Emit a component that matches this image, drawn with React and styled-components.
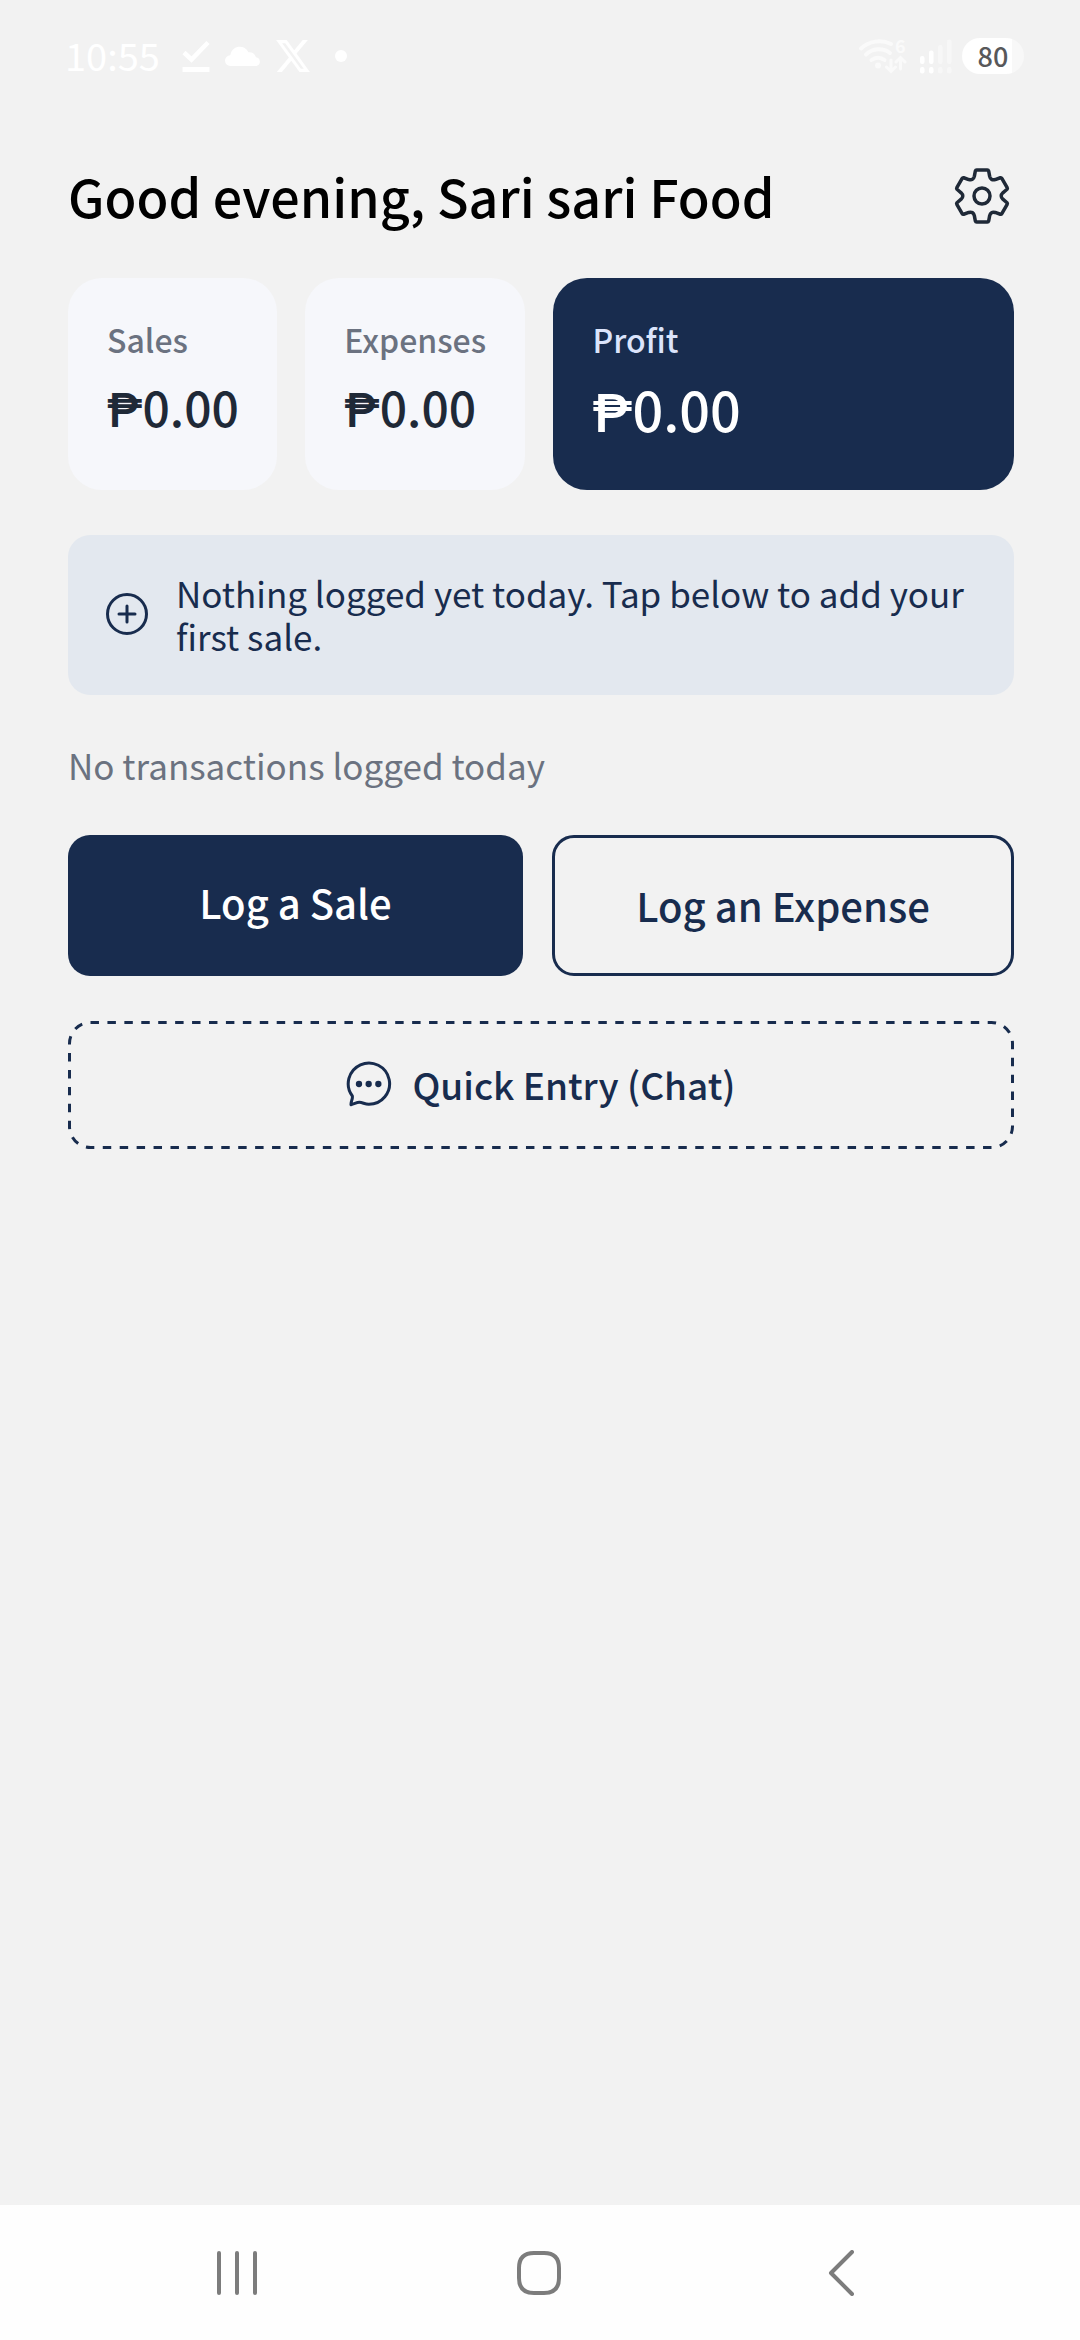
import React from "react";
import styled, { createGlobalStyle } from "styled-components";

const NAVY = "#182c4e";

const App = () => {
  return (
    <>
      <GlobalStyle />
      <Screen>
        <StatusBar />
        <Main>
          <Header>
            <Title>Good evening, Sari sari Food</Title>
            <IconButton aria-label="Settings">
              <GearIcon />
            </IconButton>
          </Header>

          <Cards>
            <Card>
              <CardLabel>Sales</CardLabel>
              <CardValue>₱0.00</CardValue>
            </Card>
            <Card>
              <CardLabel>Expenses</CardLabel>
              <CardValue>₱0.00</CardValue>
            </Card>
            <Card $dark>
              <CardLabel $dark>Profit</CardLabel>
              <CardValue $dark>₱0.00</CardValue>
            </Card>
          </Cards>

          <Banner>
            <PlusIcon />
            <BannerText>
              Nothing logged yet today. Tap below to add your first sale.
            </BannerText>
          </Banner>

          <EmptyText>No transactions logged today</EmptyText>

          <Actions>
            <ActionButton>Log a Sale</ActionButton>
            <ActionButton $outline>Log an Expense</ActionButton>
          </Actions>

          <QuickButton>
            <DashedBorder aria-hidden="true">
              <rect x="1.5" y="1.5" rx="21" pathLength="248" />
            </DashedBorder>
            <ChatIcon />
            Quick Entry (Chat)
          </QuickButton>
        </Main>
        <NavBar />
      </Screen>
    </>
  );
};

const StatusBar = () => (
  <Status>
    <Clock>10:55</Clock>
    <svg width="28" height="32" viewBox="0 0 28 32" fill="none" stroke="#fff">
      <path d="M2 12.5L9.5 19.500L26 2.5" strokeWidth="4.5" />
      <path d="M0.5 29.500H27.500" strokeWidth="5" />
    </svg>
    <svg width="36" height="20" viewBox="0 0 36 20" fill="#fff">
      <path d="M5.5 20A5.2 5.2 0 0 1 5.2 9.3A9.6 9.6 0 0 1 23.5 6.3A7.3 7.3 0 0 1 31 11.2A4.5 4.5 0 0 1 31.5 20Z" />
    </svg>
    <svg width="34" height="32" viewBox="1.2 2.2 21.7 19.6" preserveAspectRatio="none" fill="#fff">
      <path d="M18.244 2.25h3.308l-7.227 8.26 8.502 11.24H16.17l-5.214-6.817L4.99 21.75H1.68l7.73-8.835L1.254 2.25H8.08l4.713 6.231zm-1.161 17.52h1.833L7.084 4.126H5.117z" />
    </svg>
    <Dot />
    <StatusRight>
      <svg width="54" height="52" viewBox="0 -8 54 52" fill="none" stroke="#fafafa" strokeLinecap="round">
        <path d="M3 10.5A27 27 0 0 1 33 6" strokeWidth="4" />
        <path d="M8 16.5A18.5 18.5 0 0 1 32 15" strokeWidth="4" />
        <path d="M13.5 22A11 11 0 0 1 26.5 22" strokeWidth="4" />
        <circle cx="20" cy="27.5" r="3" fill="#fafafa" stroke="none" />
        <path d="M33 22V33M28.5 29L33 33.5L37.5 29M42.5 31V20M38 24L42.5 19.5L47 24" strokeWidth="3" />
        <text x="37" y="15" fontSize="18" fontWeight="700" fill="#fafafa" stroke="none">
          6
        </text>
      </svg>
      <svg width="32" height="36" viewBox="0 0 32 36">
        {[0, 1, 2, 3].map((i) => (
          <g key={i} fill={i < 2 ? "#fff" : "#f7f7f7"}>
            <rect x={i * 9} y={18 - i * 5.5} width="4.5" height={8 + i * 5.5} rx="2" />
            <rect x={i * 9} y="29" width="4.5" height="6.5" rx="2" />
          </g>
        ))}
      </svg>
      <Battery>80</Battery>
    </StatusRight>
  </Status>
);

const NavBar = () => (
  <Nav>
    <NavButton aria-label="Recent apps">
      <svg width="40" height="44" viewBox="0 0 40 44">
        <path d="M2 2V42M20 2V42M38 2V42" />
      </svg>
    </NavButton>
    <NavButton aria-label="Home">
      <svg width="44" height="44" viewBox="0 0 44 44">
        <path d="M17 2H27Q42 2 42 17V27Q42 42 27 42H17Q2 42 2 27V17Q2 2 17 2Z" />
      </svg>
    </NavButton>
    <NavButton aria-label="Back">
      <svg width="26" height="46" viewBox="0 0 26 46">
        <path d="M24 2L3 23L24 44" />
      </svg>
    </NavButton>
  </Nav>
);

// one tooth and the valley after it, turned six times around the centre
const turn = (x, y, step) => {
  const a = (step * Math.PI) / 3;
  const px = x * Math.cos(a) - y * Math.sin(a);
  const py = x * Math.sin(a) + y * Math.cos(a);
  return `${px.toFixed(1)} ${py.toFixed(1)}`;
};

const gearPath =
  [0, 1, 2, 3, 4, 5]
    .map((s) =>
      [
        s === 0 ? "M" : "L",
        turn(-20, -75, s),
        "Q", turn(-19, -78, s), turn(-16, -78, s),
        "L", turn(16, -78, s),
        "Q", turn(19, -78, s), turn(20, -75, s),
        "L", turn(23, -59, s),
        "C", turn(25, -50, s), turn(31, -47, s), turn(39.6, -49.4, s),
      ].join(" ")
    )
    .join(" ") + "Z";

const GearIcon = () => (
  <svg width="56" height="56" viewBox="-84 -84 168 168" fill="none" stroke="#1f2937" strokeWidth="10.5" strokeLinejoin="round">
    <path d={gearPath} />
    <circle r="24" />
  </svg>
);

const PlusIcon = () => (
  <Icon width="42" height="42" viewBox="0 0 42 42" strokeWidth="3">
    <circle cx="21" cy="21" r="19.5" />
    <path d="M21 13V29M13 21H29" />
  </Icon>
);

const ChatIcon = () => (
  <Icon width="46" height="46" viewBox="26 26 138 138" strokeWidth="9">
    <path d="M45 131A62 62 0 1 1 94 156C82 156 76 150 66 150C58 150 51 155 41 157C40 148 47 140 45 131Z" />
    <g fill={NAVY} stroke="none">
      <circle cx="65" cy="95" r="9.5" />
      <circle cx="94" cy="95" r="9.5" />
      <circle cx="123" cy="95" r="9.5" />
    </g>
  </Icon>
);

const GlobalStyle = createGlobalStyle`
  * {
    box-sizing: border-box;
  }

  body {
    margin: 0;
    background: #f2f2f2;
    font-family: "Noto Sans CJK JP", Roboto, sans-serif;
  }

  button {
    margin: 0;
    padding: 0;
    border: none;
    background: none;
    font: inherit;
    cursor: pointer;
  }

  svg {
    flex-shrink: 0;
  }
`;

const Screen = styled.div`
  display: flex;
  flex-direction: column;
  min-height: 100vh;
`;

const Status = styled.div`
  display: flex;
  align-items: center;
  gap: 15px;
  height: 112px;
  padding: 0 56px 0 65px;
  color: #fff;
`;

const Clock = styled.span`
  margin-right: 7px;
  padding-bottom: 2px;
  font-size: 38px;
  line-height: 44px;
  font-weight: 400;
`;

const Dot = styled.span`
  width: 12px;
  height: 12px;
  margin-left: 10px;
  border-radius: 50%;
  background: #fff;
`;

const StatusRight = styled.div`
  display: flex;
  align-items: center;
  gap: 8px;
  margin-left: auto;
`;

const Battery = styled.span`
  width: 62px;
  margin-left: 2px;
  border-radius: 18px;
  background: linear-gradient(to right, #fff 80%, #f8f8f8 80%);
  color: #58585a;
  font-size: 27px;
  line-height: 36px;
  font-weight: 500;
  text-align: center;
`;

const Main = styled.main`
  display: flex;
  flex-direction: column;
  flex: 1;
  gap: 45px;
  padding: 52px 66px 45px 68px;
`;

const Header = styled.header`
  display: flex;
  align-items: center;
  justify-content: space-between;
  margin-bottom: 5px;
`;

const Title = styled.h1`
  margin: 0;
  color: #000;
  font-size: 52px;
  line-height: 64px;
  font-weight: 500;
`;

const IconButton = styled.button`
  && {
    display: flex;
    margin-right: 4px;
  }
`;

const Cards = styled.section`
  display: grid;
  grid-template-columns: minmax(0, 209fr) minmax(0, 220fr) minmax(0, 460fr);
  gap: 28px;
`;

const Card = styled.div`
  padding: 39px 39px 45px;
  border-radius: 34px;
  background: ${(p) => (p.$dark ? NAVY : "#f6f7fb")};
`;

const CardLabel = styled.div`
  margin-bottom: 12px;
  color: ${(p) => (p.$dark ? "#dbe4fb" : "#6b7280")};
  font-size: 32px;
  line-height: 44px;
  font-weight: 500;
`;

const CardValue = styled.div`
  color: ${(p) => (p.$dark ? "#fff" : "#1f2937")};
  font-size: ${(p) => (p.$dark ? 54 : 48)}px;
  line-height: ${(p) => (p.$dark ? 72 : 66)}px;
  font-weight: 500;
  white-space: nowrap;
`;

const Banner = styled.section`
  display: flex;
  align-items: center;
  gap: 28px;
  padding: 36px 38px 38px;
  border-radius: 22px;
  background: #e3e8ef;
`;

const BannerText = styled.p`
  margin: 0;
  color: ${NAVY};
  font-size: 35px;
  line-height: 43px;
`;

const EmptyText = styled.p`
  margin: 0;
  color: #6b7280;
  font-size: 35px;
  line-height: 50px;
`;

const Actions = styled.div`
  display: grid;
  grid-template-columns: 455fr 462fr;
  gap: 29px;
`;

const ActionButton = styled.button`
  && {
    display: flex;
    justify-content: center;
    padding: 41px 0 42px;
    border: ${(p) => (p.$outline ? `3px solid ${NAVY}` : "none")};
    border-radius: 22px;
    background: ${(p) => (p.$outline ? "transparent" : NAVY)};
    color: ${(p) => (p.$outline ? NAVY : "#fff")};
    font-size: 40px;
    line-height: 52px;
    font-weight: 500;
  }
`;

const QuickButton = styled.button`
  && {
    position: relative;
    display: flex;
    align-items: center;
    justify-content: center;
    gap: 20px;
    padding: 37px 0 39px;
    color: ${NAVY};
    font-size: 37px;
    line-height: 52px;
    font-weight: 500;
  }
`;

const DashedBorder = styled.svg`
  position: absolute;
  inset: 0;
  width: 100%;
  height: 100%;

  rect {
    width: calc(100% - 3px);
    height: calc(100% - 3px);
    fill: none;
    stroke: ${NAVY};
    stroke-width: 3px;
    stroke-dasharray: 1 1;
  }
`;

const Icon = styled.svg`
  fill: none;
  stroke: ${NAVY};
  stroke-linecap: round;
  stroke-linejoin: round;
`;

const Nav = styled.nav`
  display: flex;
  height: 135px;
  padding: 0 88px 0 86px;
  background: #fefefe;
`;

const NavButton = styled.button`
  && {
    display: flex;
    flex: 1;
    align-items: center;
    justify-content: center;
  }

  svg {
    fill: none;
    stroke: #7c7c7c;
    stroke-width: 4px;
    stroke-linecap: round;
    stroke-linejoin: round;
  }
`;

export default App;
